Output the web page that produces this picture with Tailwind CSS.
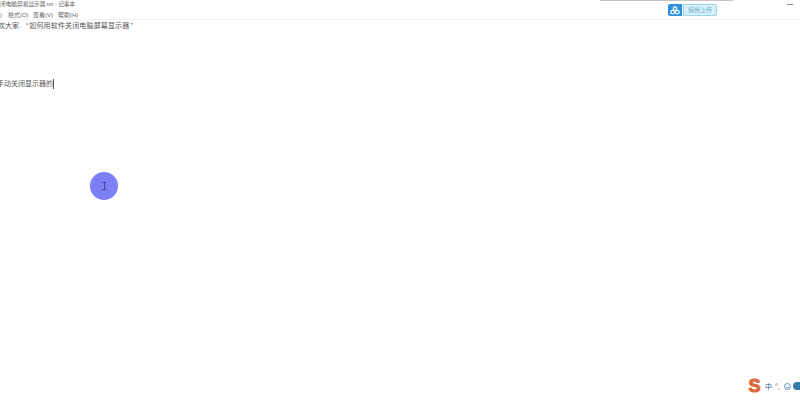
<!DOCTYPE html>
<html lang="zh">
<head>
    <meta charset="UTF-8">
    <title>记事本</title>
    <script src="https://cdn.jsdelivr.net/npm/@tailwindcss/browser@4"></script>
</head>
<body class="bg-white w-[800px] h-[400px] overflow-hidden relative font-['Liberation_Sans','Noto_Sans_CJK_SC',sans-serif] text-[#333]">

    <!-- Title bar -->
    <div class="h-[10px] flex items-center text-[5.7px] leading-none text-[#666] whitespace-nowrap">闭电脑屏幕显示器.txt - 记事本</div>

    <!-- Menu bar -->
    <div class="h-[10px] flex items-center text-[6px] leading-none text-[#666] whitespace-nowrap border-b border-[#f2f2f2]">
        <span class="w-[8px] overflow-hidden">)</span>
        <span class="w-[25px]">格式(O)</span>
        <span class="w-[25px]">查看(V)</span>
        <span>帮助(H)</span>
    </div>

    <!-- Editor text -->
    <div class="pt-[1px] text-[7px] leading-[10px] text-[#555] whitespace-nowrap">
        <div class="h-[10px] flex">
            <span class="-ml-[2px]">欢大家.</span>
            <span class="ml-[5px] mr-[1px]">“</span>
            <span class="tracking-[0.15px]">如何用软件关闭电脑屏幕显示器</span>
            <span class="ml-[1px]">”</span>
        </div>
        <div class="mt-[48px] flex items-center">
            <span class="-ml-[3px]">手动关闭显示器的</span>
            <span class="w-px h-[10px] bg-[#555]"></span>
        </div>
    </div>

    <!-- Cursor highlight -->
    <div class="absolute left-[90px] top-[172px] w-[28px] h-[28px] rounded-full bg-[#7f7ff5] flex items-center justify-center">
        <svg width="5" height="8" viewBox="0 0 5 8" fill="none" stroke="#3a3a8c" stroke-width="0.8">
            <path d="M0.5 0.5H4.5M2.5 0.5V7.5M0.5 7.5H4.5"/>
        </svg>
    </div>

    <!-- Top popup edge -->
    <div class="absolute left-[600px] top-0 w-[133px] h-[1px] bg-[#c4c4c4]"></div>

    <!-- Upload button -->
    <div class="absolute left-[668px] top-[4px] flex h-[12px]">
        <div class="w-[14px] h-[12px] bg-[#2f8fdc] rounded-l-[2px] flex items-center justify-center">
            <svg width="10" height="9" viewBox="0 0 10 9" fill="none" stroke="#fff" stroke-width="1.2">
                <circle cx="5" cy="2.6" r="1.8"/><circle cx="2.6" cy="6.2" r="1.8"/><circle cx="7.4" cy="6.2" r="1.8"/>
            </svg>
        </div>
        <div class="ml-[1px] w-[34px] h-[12px] bg-[#d6f0f9] border border-[#9ad4e8] rounded-r-[2px] flex items-center justify-center text-[6px] leading-none text-[#7ab0c8] whitespace-nowrap">拖拽上传</div>
    </div>

    <!-- Minimise mark -->
    <div class="absolute left-[787px] top-[4px] w-[6px] h-px bg-[#888]"></div>

    <!-- Sogou IME tray -->
    <div class="absolute left-[748px] top-[379px] flex items-center h-[14px]">
        <div class="w-[13px] h-[14px] flex items-center justify-center text-[#d9683a] font-bold text-[18px] leading-none [-webkit-text-stroke:1px_#d9683a]">S</div>
        <span class="ml-[4px] text-[7px] leading-none text-[#2a5d8c]">中</span>
        <span class="ml-[3px] text-[7px] leading-none text-[#2a5d8c]">°,</span>
        <svg class="ml-[4px]" width="7" height="7" viewBox="0 0 7 7" fill="none" stroke="#3a7ca8" stroke-width="0.8"><circle cx="3.5" cy="3.5" r="3"/><path d="M2.3 2.7h.1M4.6 2.7h.1M2.2 4.4q1.3 1 2.6 0"/></svg>
        <div class="ml-[2px] w-[7px] h-[8px] rounded-l-full bg-[#3a7ca8]"></div>
    </div>
</body>
</html>
